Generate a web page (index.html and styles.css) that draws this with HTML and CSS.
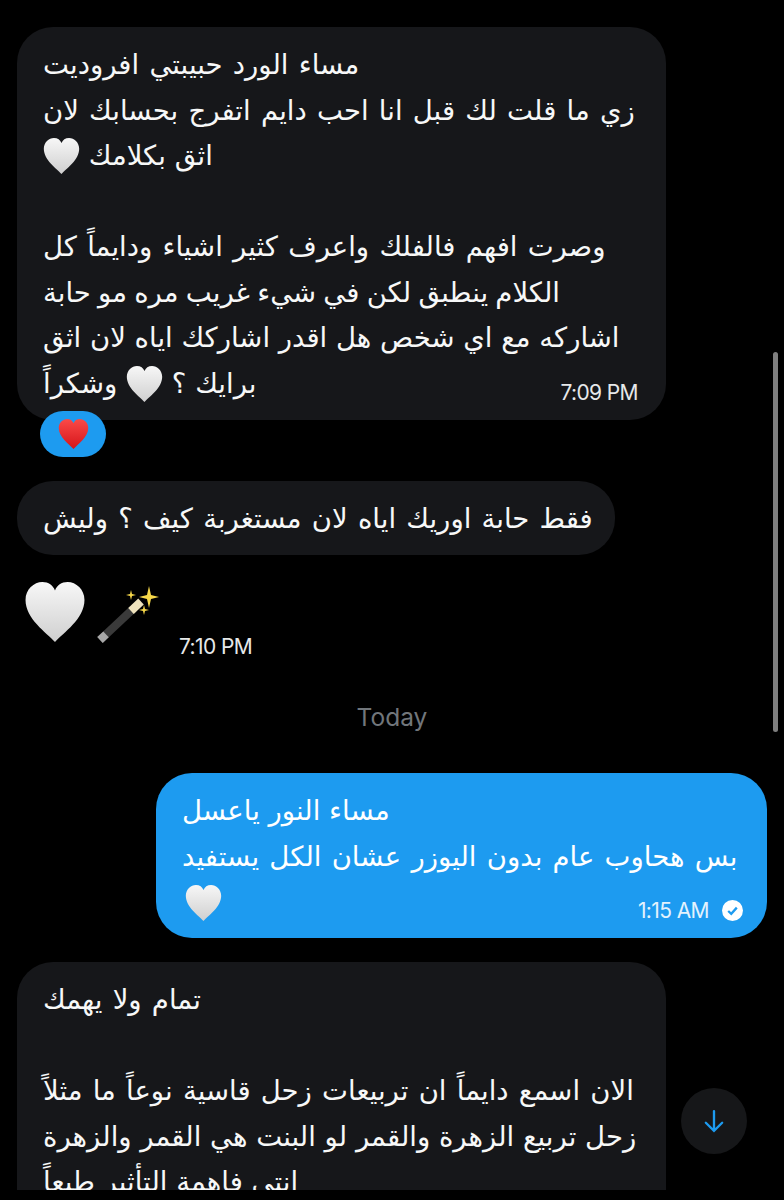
FILE: index.html
```html
<!DOCTYPE html>
<html lang="ar">
<head>
    <meta charset="UTF-8">
    <meta name="viewport" content="width=device-width, initial-scale=1.0">
    <title>Messages</title>
    <link rel="stylesheet" href="styles.css">
</head>
<body>
    <svg class="defs" width="0" height="0">
        <defs>
            <linearGradient id="whiteHeart" x1="0" y1="0" x2="0" y2="1">
                <stop offset="0" stop-color="#f7f7f7"/>
                <stop offset="1" stop-color="#cfcfcf"/>
            </linearGradient>
            <linearGradient id="redHeart" x1="0" y1="0" x2="0" y2="1">
                <stop offset="0" stop-color="#fb4a48"/>
                <stop offset="1" stop-color="#d5151b"/>
            </linearGradient>
            <path id="heart" d="M30 58 C22 49 2 36 2 18 C2 8 10 1 18 1 C24 1 28 4 30 9 C32 4 36 1 42 1 C50 1 58 8 58 18 C58 36 38 49 30 58 Z"/>
        </defs>
    </svg>

    <main class="chat">
        <div class="bubble bubble-in bubble-first">
            <p class="loose">مساء الورد حبيبتي افروديت</p>
            <p class="loose">زي ما قلت لك قبل انا احب دايم اتفرج بحسابك لان</p>
            <p>اثق بكلامك <svg class="heart" viewBox="2 1 56 57"><use href="#heart" fill="url(#whiteHeart)"/></svg></p>
            <p class="blank">&nbsp;</p>
            <p class="loose">وصرت افهم فالفلك واعرف كثير اشياء ودايماً كل</p>
            <p class="tight">الكلام ينطبق لكن في شيء غريب مره مو حابة</p>
            <p>اشاركه مع اي شخص هل اقدر اشاركك اياه لان اثق</p>
            <p>برايك ؟ <svg class="heart" viewBox="2 1 56 57"><use href="#heart" fill="url(#whiteHeart)"/></svg> وشكراً</p>
            <span class="time time-first">7:09 PM</span>
        </div>
        <div class="reaction">
            <svg class="reaction-heart" viewBox="2 1 56 57"><use href="#heart" fill="url(#redHeart)"/></svg>
        </div>

        <div class="bubble bubble-in bubble-short">
            <p class="loose">فقط حابة اوريك اياه لان مستغربة كيف ؟ وليش</p>
        </div>

        <div class="emoji-row">
            <svg class="emoji-heart" viewBox="2 1 56 57"><use href="#heart" fill="url(#whiteHeart)"/></svg>
            <svg class="wand" viewBox="0 0 62 60">
                <path d="M3 54 L36 23" stroke="#3a3a3a" stroke-width="8"/>
                <path d="M3 54 L9 48.400" stroke="#a8a8a8" stroke-width="8"/>
                <path d="M34 25 L44 15.500" stroke="#efe3bd" stroke-width="8"/>
                <path d="M52 0 L54 9 L62 11 L54 13 L52 22 L50 13 L42 11 L50 9 Z" fill="#f7d84a"/>
                <path d="M34 4 L35 8 L39 9 L35 10 L34 14 L33 10 L29 9 L33 8 Z" fill="#f7d84a"/>
                <path d="M47 19 L48 23 L52 24 L48 25 L47 29 L46 25 L42 24 L46 23 Z" fill="#f7d84a"/>
            </svg>
            <span class="time time-emoji">7:10 PM</span>
        </div>

        <div class="day">Today</div>

        <div class="bubble bubble-out">
            <p>مساء النور ياعسل</p>
            <p class="loose">بس هحاوب عام بدون اليوزر عشان الكل يستفيد</p>
            <p class="heart-line"><svg class="heart" viewBox="2 1 56 57"><use href="#heart" fill="url(#whiteHeart)"/></svg></p>
            <div class="meta">
                <span class="time">1:15 AM</span>
                <svg class="check" viewBox="0 0 22 22">
                    <circle cx="11" cy="11" r="11" fill="#fff"/>
                    <path d="M6.500 11.500 L9.700 14.500 L15.500 8" fill="none" stroke="#1d9bf0" stroke-width="2.400"/>
                </svg>
            </div>
        </div>

        <div class="bubble bubble-in bubble-last">
            <p class="loose">تمام ولا يهمك</p>
            <p class="blank">&nbsp;</p>
            <p class="loose">الان اسمع دايماً ان تربيعات زحل قاسية نوعاً ما مثلاً</p>
            <p>زحل تربيع الزهرة والقمر لو البنت هي القمر والزهرة</p>
            <p>انتي فاهمة التأثير طبعاً</p>
        </div>
    </main>

    <div class="scrollbar"></div>
    <button class="to-bottom">
        <svg viewBox="0 0 24 24" width="28" height="28">
            <path d="M12 3.500 V20 M5 13.500 L12 20.500 L19 13.500" fill="none" stroke="#1d9bf0" stroke-width="2" stroke-linecap="round"/>
        </svg>
    </button>
</body>
</html>
```

FILE: styles.css
```css
html, body {
    margin: 0;
    height: 1200px;
    overflow: hidden;
    background-color: #000;
}

body {
    position: relative;
    font-family: "DejaVu Sans", "Noto Sans", sans-serif;
    color: #f7f8f8;
}

.defs {
    position: absolute;
}

.chat {
    height: 1190px;
    overflow: hidden;
    padding: 27px 17px 0;
    box-sizing: border-box;
    display: flex;
    flex-direction: column;
    align-items: flex-start;
}

.chat > * {
    flex-shrink: 0;
}

.bubble {
    box-sizing: border-box;
    border-radius: 36px;
    padding: 15px 26px;
    position: relative;
}

.bubble-in {
    background-color: #16171a;
    width: 649px;
}

.bubble p {
    margin: 0;
    direction: rtl;
    text-align: left;
    width: max-content;
    font-size: 27.500px;
    line-height: 45.500px;
    height: 45.500px;
    white-space: nowrap;
}

.bubble p.loose {
    word-spacing: 1.500px;
}

.bubble p.tight {
    word-spacing: -1.500px;
}

.bubble-first {
    height: 393px;
}

.bubble-short {
    width: 598px;
    height: 74px;
    margin-top: 24px;
}

.bubble-out {
    background-color: #1d9bf0;
    color: #fff;
    width: 611px;
    height: 165px;
    margin-left: 139px;
    margin-top: 41px;
}

.bubble-last {
    margin-top: 24px;
    height: 300px;
}

.heart {
    width: 37px;
    height: 36px;
    vertical-align: -9px;
}

.heart-line .heart {
    margin-left: 3px;
    vertical-align: -10px;
}

.time {
    font-family: Inter, "Liberation Sans", sans-serif;
    font-size: 21px;
    letter-spacing: -0.6px;
    color: #e7e9ea;
}

.time-first {
    position: absolute;
    right: 28px;
    bottom: 15px;
}

.reaction {
    width: 66px;
    height: 46px;
    margin: -9px 0 0 23px;
    background-color: #1d9bf0;
    border-radius: 23px;
    display: flex;
    align-items: center;
    justify-content: center;
    position: relative;
}

.reaction-heart {
    width: 31px;
    height: 30px;
}

.emoji-row {
    display: flex;
    align-items: flex-start;
    margin: 27px 0 0 7px;
    height: 80px;
}

.emoji-heart {
    width: 62px;
    height: 60px;
}

.wand {
    width: 62px;
    height: 60px;
    margin: 4px 0 0 11px;
}

.time-emoji {
    margin: 52px 0 0 20px;
}

.day {
    align-self: center;
    font-family: Inter, "Liberation Sans", sans-serif;
    font-size: 24.500px;
    color: #71767b;
    margin-top: 41px;
    height: 29px;
    line-height: 29px;
}

.meta {
    position: absolute;
    right: 24px;
    bottom: 15px;
    display: flex;
    align-items: center;
    gap: 13px;
    color: #fff;
}

.meta .time {
    color: #e3f2fd;
}

.check {
    width: 21px;
    height: 21px;
}

.scrollbar {
    position: absolute;
    left: 773px;
    top: 352px;
    width: 5px;
    height: 380px;
    border-radius: 3px;
    background-color: #7f7f7f;
}

.to-bottom {
    position: absolute;
    left: 681px;
    top: 1088px;
    width: 66px;
    height: 66px;
    border: none;
    border-radius: 50%;
    background-color: #161719;
    display: flex;
    align-items: center;
    justify-content: center;
    padding: 0;
}
```
